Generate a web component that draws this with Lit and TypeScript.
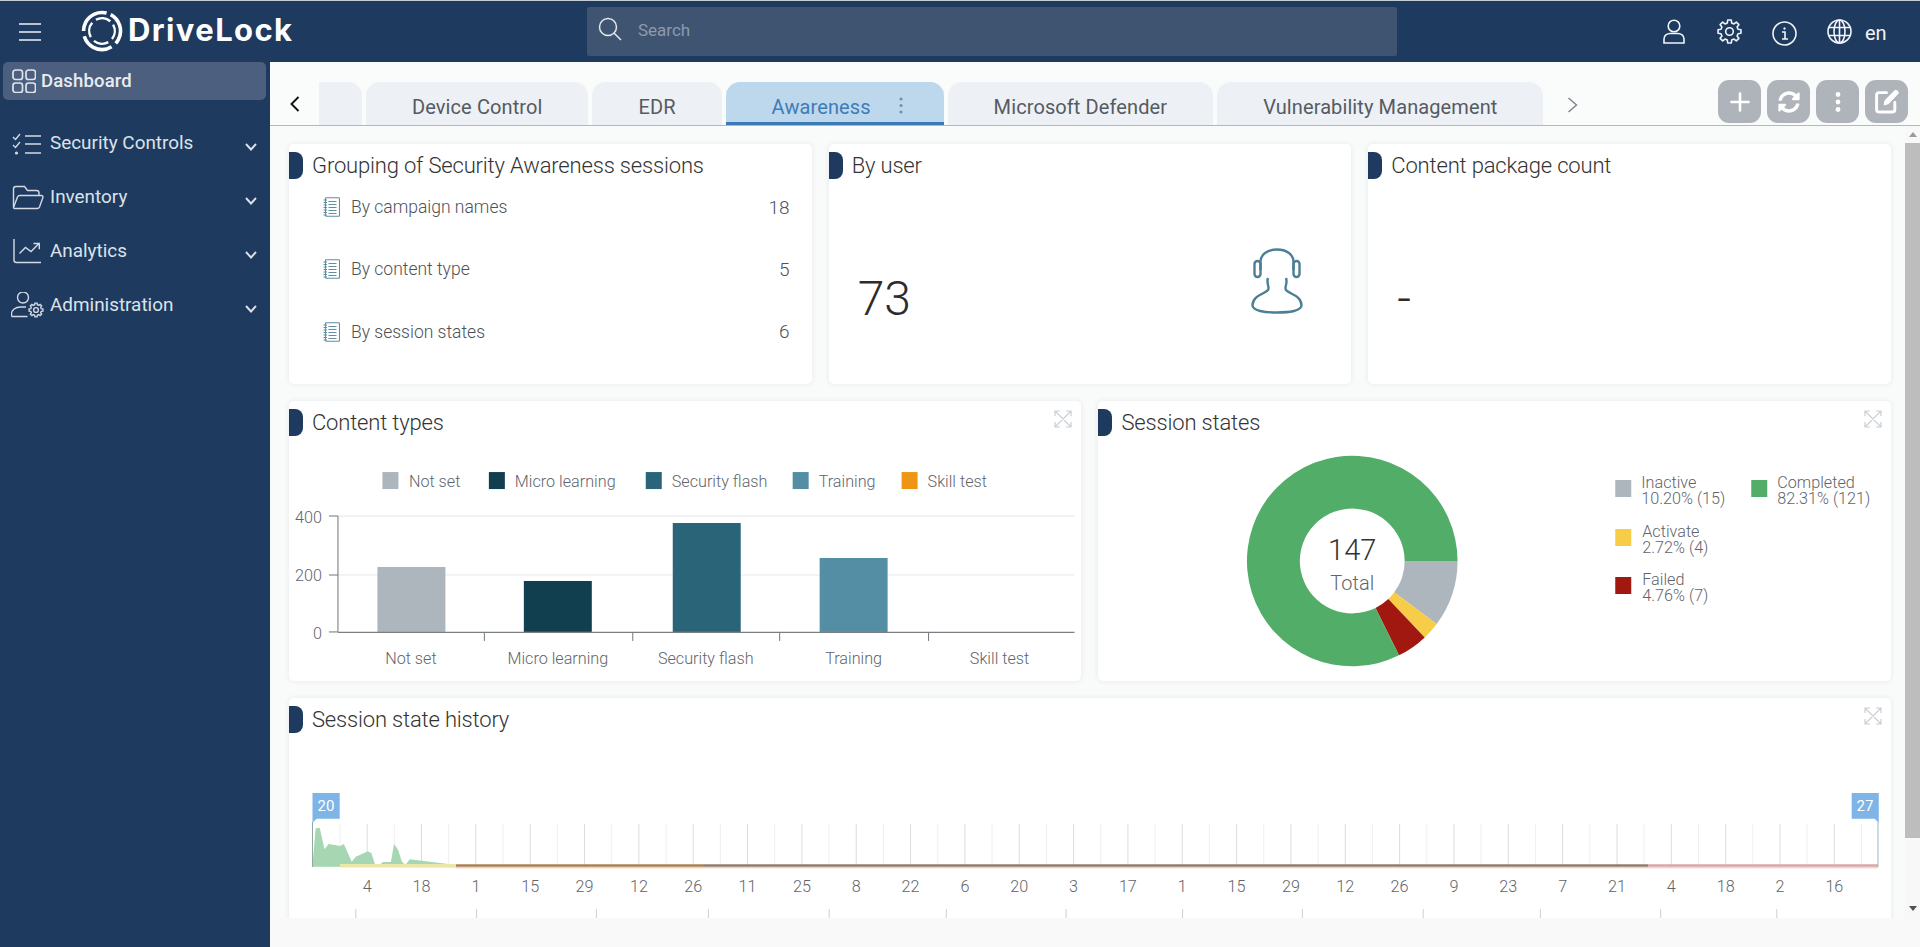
import { LitElement, html, css, svg } from "lit";
import { customElement } from "lit/decorators.js";

function gearPath(cx: number, cy: number, ro: number, ri: number, teeth: number) {
  const pts: string[] = [];
  const step = (Math.PI * 2) / teeth;
  for (let i = 0; i < teeth; i++) {
    const a = i * step - Math.PI / 2;
    const p = (r: number, t: number) =>
      `${(cx + r * Math.cos(a + t * step)).toFixed(2)} ${(cy + r * Math.sin(a + t * step)).toFixed(2)}`;
    pts.push(`${i === 0 ? "M" : "L"}${p(ro, -0.2)}`, `L${p(ro, 0.2)}`, `L${p(ri, 0.32)}`, `L${p(ri, 0.68)}`);
  }
  return pts.join(" ") + "Z";
}

function slice(cx: number, cy: number, ro: number, ri: number, a0: number, a1: number) {
  const p = (r: number, a: number) => `${(cx + r * Math.cos(a)).toFixed(2)} ${(cy + r * Math.sin(a)).toFixed(2)}`;
  const large = a1 - a0 > Math.PI ? 1 : 0;
  return `M${p(ro, a0)} A${ro} ${ro} 0 ${large} 1 ${p(ro, a1)} L${p(ri, a1)} A${ri} ${ri} 0 ${large} 0 ${p(ri, a0)}Z`;
}

const expandIcon = html`<svg class="expand" viewBox="0 0 18 18" fill="none" stroke="#c9cfd6" stroke-width="1.2">
  <path d="M1.5 1.5 16.5 16.5M16.5 1.5 1.5 16.5M1 6V1h5M12 1h5v5M1 12v5h5M17 12v5h-5" />
</svg>`;

const notebook = html`<svg class="nb" viewBox="0 0 17 20" fill="none" stroke="#5f8fa3" stroke-width="1.1">
  <rect x="2.5" y="0.8" width="14" height="18.4" rx="0.6" />
  <path d="M5.5 4.5h8M5.5 7.5h8M5.5 10.5h8M5.5 13.5h8M5.5 16.5h8" />
  <path d="M0.5 3h3.5M0.5 5.5h3.5M0.5 8h3.5M0.5 10.5h3.5M0.5 13h3.5M0.5 15.5h3.5M0.5 18h3.5" />
</svg>`;

const navItems = [
  {
    label: "Security Controls",
    icon: svg`<path d="M13 135l2.5 2.5 4.5-5.5M13 143l2.5 2.5 4.5-5.5M25 134h16M25 142h16M25 151h16" /><circle cx="16.5" cy="151" r="1.6" fill="#d3dae3" stroke="none" />`,
    box: "11 128 33 26",
  },
  {
    label: "Inventory",
    icon: svg`<path d="M13.5 206V188a2.5 2.5 0 0 1 2.5-2.5h8.5l3 4h9a2.5 2.5 0 0 1 2.5 2.5v2.5" /><path d="M13.5 206.5l4-10.500a2.500 2.500 0 0 1 2.300-1.500h21.700a1.500 1.500 0 0 1 1.400 2l-3.400 9.500a2.500 2.500 0 0 1-2.300 1.500h-22a1.500 1.500 0 0 1-1.700-1z" />`,
    box: "11 183 33 26",
  },
  {
    label: "Analytics",
    icon: svg`<path d="M14 239v21a2.500 2.500 0 0 0 2.500 2.500H41" /><path d="M19.500 253.500l6-6 5.500 4 8-8M33.500 243.500h5.800v5.800" />`,
    box: "11 238 33 26",
  },
  {
    label: "Administration",
    icon: svg`<circle cx="23" cy="297.500" r="5.500" /><path d="M11.500 316.500v-2.500c0-4 4-7 9-7h5.500M11.500 316.500h16" /><path d="${gearPath(36, 310, 7, 5.4, 8)}" /><circle cx="36" cy="310" r="2.400" />`,
    box: "11 292 33 26",
  },
];

const tabs = ["Device Control", "EDR", "Awareness", "Microsoft Defender", "Vulnerability Management"];

const rows = [
  ["By campaign names", "18"],
  ["By content type", "5"],
  ["By session states", "6"],
];

const barLegend = [
  ["Not set", 382.5, 409, "#adb5bd"],
  ["Micro learning", 489, 515, "#123f50"],
  ["Security flash", 646, 672, "#2a6478"],
  ["Training", 793, 819, "#548ea5"],
  ["Skill test", 902, 928, "#ee9516"],
] as const;

const bars = [
  [377.5, 567, "#adb5bd", "Not set", 411],
  [524, 581, "#123f50", "Micro learning", 558],
  [673, 523, "#2a6478", "Security flash", 706],
  [820, 558, "#548ea5", "Training", 854],
  [0, 632, "none", "Skill test", 1000],
] as const;

const donut = [
  [10.2, "#adb5bd"],
  [2.72, "#f7cc47"],
  [4.76, "#a0180f"],
  [82.32, "#52ad69"],
] as const;

const donutLegend = [
  [1616, 480, 1642, 482, "Inactive", "10.20% (15)", "#adb5bd"],
  [1752, 480, 1778, 482, "Completed", "82.31% (121)", "#52ad69"],
  [1616, 529, 1643, 531, "Activate", "2.72% (4)", "#f7cc47"],
  [1616, 577, 1643, 579, "Failed", "4.76% (7)", "#a0180f"],
] as const;

const historyLabels = "4 18 1 15 29 12 26 11 25 8 22 6 20 3 17 1 15 29 12 26 9 23 7 21 4 18 2 16".split(" ");
const lowerTicks = [355.8, 476.6, 596.4, 708.4, 829.2, 946.3, 1066.1, 1182.6, 1302.4, 1423.2, 1540.4, 1660.7, 1776.8];
const areaZoom = [
  [62, 530], [68, 415], [76, 413], [85, 478], [93, 462], [115, 468], [122, 462], [137, 515], [145, 500], [168, 484],
  [175, 490], [182, 525], [190, 525], [197, 516], [212, 516], [218, 462], [226, 480], [233, 515], [240, 525], [248, 508],
  [337, 525], [337, 532],
];
const areaPoints = areaZoom.map(([x, y]) => `${(280 + x / 1.912).toFixed(1)},${(690 + y / 3).toFixed(1)}`).join(" ");

@customElement("app-root")
export class AppRoot extends LitElement {
  static styles = css`
    :host {
      display: block;
      width: 1920px;
      height: 947px;
      overflow: hidden;
      font-family: Roboto, "Noto Sans", sans-serif;
      background: #f9fafa;
      color: #333;
    }
    .top {
      height: 62px;
      box-sizing: border-box;
      border-top: 1px solid #c5ccd6;
      background: #1e3a5f;
      display: flex;
      align-items: center;
      position: relative;
    }
    .burger { width: 22px; height: 18px; margin-left: 19px; flex: none; }
    .logo { width: 42px; height: 42px; margin-left: 40px; margin-top: -2px; flex: none; }
    .brand {
      margin-left: 5px;
      font: 700 31px Inter, Roboto, sans-serif;
      letter-spacing: 1.4px;
      color: #fff;
      width: 459px;
      flex: none;
      margin-top: -4px;
    }
    .search {
      width: 810px;
      height: 49px;
      margin-top: -1px;
      box-sizing: border-box;
      background: #3f5471;
      border-radius: 2px;
      display: flex;
      align-items: center;
      padding-left: 11px;
      flex: none;
    }
    .search svg { width: 24px; height: 24px; margin-top: -5px; }
    .search input {
      border: 0;
      background: none;
      outline: 0;
      margin-left: 14px;
      margin-top: -3px;
      font: 400 17px Roboto, sans-serif;
      color: #fff;
    }
    .search input::placeholder { color: #8c9aae; opacity: 1; }
    .tools { flex: 1; display: flex; align-items: center; padding-left: 266px; }
    .tools svg { flex: none; fill: none; stroke: #f1f4f7; stroke-width: 1.6; }
    .t-user { width: 22px; height: 25px; }
    .t-gear { width: 25px; height: 25px; margin-left: 32px; }
    .t-info { width: 25px; height: 25px; margin-left: 30px; margin-top: 4px; }
    .t-globe { width: 25px; height: 25px; margin-left: 30px; }
    .lang { margin-left: 13px; color: #f1f4f7; font: 400 20px Roboto, sans-serif; margin-top: 2px; }

    .body { display: flex; height: 885px; }
    .side { width: 270px; flex: none; background: #1e3a5f; }
    .dash {
      margin: 0 4px 0 3px;
      height: 38px;
      background: #4c5f7f;
      border-radius: 5px;
      display: flex;
      align-items: center;
      padding-left: 9px;
      color: #e8ecf1;
      font-weight: 500;
      font-size: 18.5px;
      letter-spacing: 0.15px;
      line-height: 40px;
    }
    .dash svg { width: 24px; height: 24px; margin-right: 5px; fill: none; stroke: #dfe5ec; stroke-width: 1.7; flex: none; }
    .nav { margin-top: 16px; }
    .nav-row {
      height: 54px;
      display: flex;
      align-items: center;
      padding: 0 13px 0 11px;
      color: #dce2e9;
      font-size: 18.9px;
    }
    .nav-row .ico { width: 33px; height: 26px; margin-right: 6px; fill: none; stroke: #d3dae3; stroke-width: 1.4; flex: none; }
    .nav-row span { flex: 1; margin-top: -1px; }
    .nav-row .chev { width: 12px; height: 8px; margin-top: 8px; fill: none; stroke: #dce2e9; stroke-width: 1.9; }

    .main { flex: 1; min-width: 0; display: flex; flex-direction: column; }
    .tabbar {
      height: 64px;
      box-sizing: border-box;
      border-bottom: 1px solid #b3b8be;
      display: flex;
      align-items: flex-end;
      padding-left: 20px;
      padding-right: 12px;
      background: #fafbfb;
    }
    .tab-chev { align-self: flex-start; width: 11px; height: 16px; fill: none; stroke-width: 1.9; flex: none; }
    .tab-back { margin-top: 34px; margin-right: 19px; stroke: #111; width: 10px; }
    .tab-next { margin-top: 35px; margin-left: 24px; stroke: #80868c; stroke-width: 1.5; }
    .tab {
      height: 43px;
      box-sizing: border-box;
      padding: 7px 46px 0;
      margin-right: 4px;
      background: #edf0f5;
      border-radius: 14px 14px 0 0;
      display: flex;
      align-items: center;
      font-size: 20px;
      letter-spacing: 0.1px;
      color: #555b62;
      white-space: nowrap;
    }
    .tab.stub { width: 43px; padding: 0; border-top-left-radius: 0; }
    .tab.on {
      background: #bdd7ed;
      color: #3f7cb7;
      box-shadow: inset 0 -3px 0 #3c7ab6;
      padding-right: 41px;
    }
    .tab.on svg { width: 4px; height: 17px; margin-left: 28px; margin-top: -4px; fill: #6d8fae; }
    .tab.last { margin-right: 0; }
    .actions {
      margin-left: auto;
      align-self: flex-start;
      margin-top: 18px;
      display: flex;
      gap: 6px;
    }
    .act {
      width: 43px;
      height: 43px;
      border-radius: 11px;
      background: #aeb4ba;
      display: flex;
      align-items: center;
      justify-content: center;
    }
    .act svg { width: 22px; height: 22px; }
    .act svg.edit { width: 25px; height: 25px; }

    .middle { height: 792px; display: flex; }
    .pane {
      flex: 1;
      min-width: 0;
      overflow: hidden;
      box-sizing: border-box;
      padding: 18px 14px 0 19px;
      display: grid;
      grid-template-columns: repeat(6, 1fr);
      grid-template-rows: 240px 280px 300px;
      gap: 17px;
    }
    .card {
      background: #fff;
      border-radius: 5px;
      box-shadow: 0 0 5px rgba(60, 80, 110, 0.1);
      position: relative;
      display: flex;
      flex-direction: column;
      min-width: 0;
    }
    .c2 { grid-column: span 2; }
    .c3 { grid-column: span 3; }
    .c6 { grid-column: span 6; }
    .head { display: flex; padding-top: 8px; flex: none; }
    .accent { width: 14px; height: 27px; background: #1e3a5f; border-radius: 0 8px 8px 0; flex: none; }
    .title { margin-left: 9px; font-size: 22px; line-height: 27px; font-weight: 300; color: #333; letter-spacing: -0.17px; }
    .expand { position: absolute; top: 9px; right: 9px; width: 18px; height: 18px; }
    .list { padding: 18px 22px 0 34px; display: flex; flex-direction: column; gap: 42.4px; }
    .row { height: 20px; display: flex; align-items: center; font-size: 17.5px; font-weight: 300; color: #4c5259; }
    .row b { font-weight: 300; margin-left: auto; font-size: 19px; }
    .nb { width: 17px; height: 20px; margin-right: 11px; }
    .metric { display: flex; justify-content: space-between; align-items: flex-start; padding: 69px 48px 0 29px; }
    .num { font-size: 48px; font-weight: 300; line-height: 50px; margin-top: 26px; color: #2c2c2c; }
    .person { width: 52px; height: 66px; fill: none; stroke: #4a7f95; stroke-width: 2.4; }
    svg.plot { display: block; }
    .plot text { font-family: Roboto, sans-serif; font-weight: 300; font-size: 16.2px; fill: #5f656b; dominant-baseline: central; }
    .plot text.mid { text-anchor: middle; }
    .plot text.end { text-anchor: end; }
    .plot text.big { font-size: 29px; font-weight: 300; fill: #333; }
    .plot text.tot { font-size: 20px; fill: #5f656b; }
    .plot text.flag { font-size: 15px; font-weight: 400; fill: #fff; }

    .bar { width: 15px; flex: none; background: #f8f8f8; display: flex; flex-direction: column; align-items: center; }
    .bar-top { height: 17px; flex: none; display: flex; align-items: center; justify-content: center; }
    .bar-thumb { height: 695px; width: 100%; background: #bdbdbd; flex: none; }
    .bar-bot { flex: 1; display: flex; align-items: flex-end; justify-content: center; padding-bottom: 7px; box-sizing: border-box; width: 100%; }
    .tri-up { border: 4px solid transparent; border-top: 0; border-bottom: 5px solid #9a9a9a; }
    .tri-down { border: 4px solid transparent; border-bottom: 0; border-top: 5px solid #505050; }
    .foot { height: 29px; background: #f9f9f9; }
  `;

  render() {
    const step = 27.17;
    const ticks = Array.from({ length: 57 }, (_, i) => 340 + step * i);
    let acc = 0;
    const arcs = donut.map(([p, col]) => {
      const a0 = (acc / 100) * Math.PI * 2;
      acc += p;
      const a1 = (acc / 100) * Math.PI * 2;
      return svg`<path d="${slice(1353, 561, 105.3, 52.4, a0, a1)}" fill="${col}" />`;
    });
    return html`
      <div class="top">
        <svg class="burger" viewBox="0 0 22 18" stroke="#eef1f5" stroke-width="1.6"><path d="M0 1h22M0 9h22M0 17h22" /></svg>
        <svg class="logo" viewBox="0 0 42 42" fill="none" stroke="#fff">
          <circle cx="21" cy="21" r="18.500" stroke-width="3.600" stroke-dasharray="33.500 5.250" transform="rotate(-62 21 21)" />
          <circle cx="21" cy="21" r="12.800" stroke-width="2.400" stroke-dasharray="15.200 4.900" transform="rotate(-30 21 21)" />
        </svg>
        <div class="brand">DriveLock</div>
        <div class="search">
          <svg viewBox="0 0 24 24" fill="none" stroke="#e4e8ee" stroke-width="1.500"><circle cx="10" cy="10" r="8.500" /><path d="M16.200 16.200 23 23" /></svg>
          <input placeholder="Search" />
        </div>
        <div class="tools">
          <svg class="t-user" viewBox="0 0 22 25"><circle cx="11" cy="7" r="5.800" /><path d="M1 24v-4c0-3.500 3-5.500 6-5.500h8c3 0 6 2 6 5.500v4z" /></svg>
          <svg class="t-gear" viewBox="0 0 25 25"><path d="${gearPath(12.5, 12.5, 11.6, 8.800, 8)}" stroke-linejoin="round" /><circle cx="12.500" cy="12.500" r="3.800" /></svg>
          <svg class="t-info" viewBox="0 0 25 25"><circle cx="12.500" cy="12.500" r="11.500" /><path d="M10 11h3v7M10 18h6" /><circle cx="12.500" cy="7.500" r="0.900" fill="#f1f4f7" stroke-width="0.500" /></svg>
          <svg class="t-globe" viewBox="0 0 25 25"><circle cx="12.500" cy="12.500" r="11.500" /><ellipse cx="12.500" cy="12.500" rx="5.500" ry="11.500" /><path d="M12.500 1v23M1.500 8.500h22M1.500 16.500h22" /></svg>
          <div class="lang">en</div>
        </div>
      </div>
      <div class="body">
        <aside class="side">
          <div class="dash">
            <svg viewBox="0 0 24 24"><rect x="1" y="1" width="9.500" height="9.500" rx="2.500" /><rect x="14" y="1" width="9.500" height="9.500" rx="2.500" /><rect x="1" y="14" width="9.500" height="9.500" rx="2.500" /><rect x="14" y="14" width="9.500" height="9.500" rx="2.500" /></svg>
            Dashboard
          </div>
          <div class="nav">
            ${navItems.map(
              (n) => html`<div class="nav-row">
                <svg class="ico" viewBox="${n.box}">${n.icon}</svg>
                <span>${n.label}</span>
                <svg class="chev" viewBox="0 0 12 8"><path d="M1 1l5 5.500 5-5.500" /></svg>
              </div>`
            )}
          </div>
        </aside>
        <main class="main">
          <div class="tabbar">
            <svg class="tab-chev tab-back" viewBox="0 0 10 16"><path d="M8.500 1 1.500 8l7 7" /></svg>
            <div class="tab stub"></div>
            ${tabs.map(
              (t, i) => html`<div class="tab ${t === "Awareness" ? "on" : ""} ${i === tabs.length - 1 ? "last" : ""}">
                ${t}${t === "Awareness"
                  ? html`<svg viewBox="0 0 4 17"><circle cx="2" cy="2" r="1.500" /><circle cx="2" cy="8.500" r="1.500" /><circle cx="2" cy="15" r="1.500" /></svg>`
                  : ""}
              </div>`
            )}
            <svg class="tab-chev tab-next" viewBox="0 0 11 16"><path d="M1.500 1l8 7-8 7" /></svg>
            <div class="actions">
              <div class="act"><svg viewBox="0 0 22 22" stroke="#fff" stroke-width="2.600" stroke-linecap="round"><path d="M11 2.500v17M2.500 11h17" /></svg></div>
              <div class="act"><svg viewBox="0 0 512 512" fill="#fff"><path d="M370.72 133.28C339.458 104.008 298.888 87.962 255.848 88c-77.458.068-144.328 53.178-162.791 126.85-1.344 5.363-6.122 9.15-11.651 9.15H24.103c-7.498 0-13.194-6.807-11.807-14.176C33.933 94.924 134.813 8 256 8c66.448 0 126.791 26.136 171.315 68.685L463.03 40.97C478.149 25.851 504 36.559 504 57.941V192c0 13.255-10.745 24-24 24H345.941c-21.382 0-32.09-25.851-16.971-40.971l41.75-41.749zM32 296h134.059c21.382 0 32.09 25.851 16.971 40.971l-41.75 41.75c31.262 29.273 71.835 45.319 114.876 45.28 77.418-.07 144.315-53.144 162.787-126.849 1.344-5.363 6.122-9.15 11.651-9.15h57.304c7.498 0 13.194 6.807 11.807 14.176C478.067 417.076 377.187 504 256 504c-66.448 0-126.791-26.136-171.315-68.685L48.97 471.03C33.851 486.149 8 475.441 8 454.059V320c0-13.255 10.745-24 24-24z" /></svg></div>
              <div class="act"><svg viewBox="0 0 22 22" fill="#fff"><circle cx="11" cy="3.500" r="2.400" /><circle cx="11" cy="11" r="2.400" /><circle cx="11" cy="18.500" r="2.400" /></svg></div>
              <div class="act"><svg class="edit" viewBox="0 0 24 24" fill="none" stroke="#fff" stroke-width="2.800" stroke-linecap="round" stroke-linejoin="round"><path d="M12 3.500H4.500a2 2 0 0 0-2 2V20a2 2 0 0 0 2 2H18a2 2 0 0 0 2-2v-7" /><path d="M10 15l.800-3.800L20.300 1.800a1 1 0 0 1 1.400 0l1 1a1 1 0 0 1 0 1.400L13.500 14z" fill="#fff" stroke-width="1.400" /></svg></div>
            </div>
          </div>
          <div class="middle">
            <div class="pane">
              <section class="card c2">
                <div class="head"><div class="accent"></div><div class="title">Grouping of Security Awareness sessions</div></div>
                <div class="list">
                  ${rows.map((r) => html`<div class="row">${notebook}<span>${r[0]}</span><b>${r[1]}</b></div>`)}
                </div>
              </section>
              <section class="card c2">
                <div class="head"><div class="accent"></div><div class="title">By user</div></div>
                <div class="metric">
                  <div class="num">73</div>
                  <svg class="person" viewBox="0 0 52 66">
                    <path d="M9.500 22V14C9.500 6 17 1.500 26 1.500S42.500 6 42.500 14V22" />
                    <rect x="3.500" y="13" width="6" height="16" rx="3" /><rect x="42.500" y="13" width="6" height="16" rx="3" />
                    <path d="M17 30C15 36 19 39 17 42C14 46 2 47 1.500 57C1 63 14 64.500 26 64.500S51 63 50.500 57C50 47 38 46 35 42C33 39 37 36 35 30" />
                  </svg>
                </div>
              </section>
              <section class="card c2">
                <div class="head"><div class="accent"></div><div class="title">Content package count</div></div>
                <div class="metric"><div class="num">-</div></div>
              </section>

              <section class="card c3">
                <div class="head"><div class="accent"></div><div class="title">Content types</div></div>
                ${expandIcon}
                <svg class="plot" width="100%" height="245" viewBox="289 436 793 245">
                  ${barLegend.map(
                    ([t, sx, tx, col]) => svg`<rect x="${sx}" y="472" width="16" height="17" fill="${col}" /><text x="${tx}" y="481">${t}</text>`
                  )}
                  <path d="M338 516H1075M338 575H1075" stroke="#e8eaec" stroke-width="1.200" fill="none" />
                  ${bars.map(
                    ([x, top, col]) => (col === "none" ? "" : svg`<rect x="${x}" y="${top}" width="68" height="${632 - top}" fill="${col}" />`)
                  )}
                  <path d="M329 516h9M329 575h9M329 632h9M338 516V632M484.500 632v9M633 632v9M780 632v9M929 632v9" stroke="#6f7478" stroke-width="1" fill="none" />
                  <path d="M338 632.500H1075" stroke="#7a7f84" stroke-width="1.300" />
                  <text class="end" x="322" y="517">400</text>
                  <text class="end" x="322" y="576">200</text>
                  <text class="end" x="322" y="634">0</text>
                  ${bars.map(([, , , t, cx]) => svg`<text class="mid" x="${cx}" y="659">${t}</text>`)}
                </svg>
              </section>
              <section class="card c3">
                <div class="head"><div class="accent"></div><div class="title">Session states</div></div>
                ${expandIcon}
                <svg class="plot" width="100%" height="245" viewBox="1099 436 792 245">
                  ${arcs}
                  <text class="mid big" x="1353" y="550">147</text>
                  <text class="mid tot" x="1353" y="583">Total</text>
                  ${donutLegend.map(
                    ([sx, sy, tx, ty, a, b, col]) =>
                      svg`<rect x="${sx}" y="${sy}" width="16" height="17" fill="${col}" /><text x="${tx}" y="${ty}">${a}</text><text x="${tx}" y="${ty + 16}">${b}</text>`
                  )}
                </svg>
              </section>

              <section class="card c6">
                <div class="head"><div class="accent"></div><div class="title">Session state history</div></div>
                ${expandIcon}
                <svg class="plot" width="100%" height="200" viewBox="289 733 1602 200">
                  ${ticks.map(
                    (x, i) => svg`<line x1="${x}" x2="${x}" y1="824" y2="867" stroke="${i % 2 ? "#dcdcdc" : "#efefef"}" stroke-width="1" />`
                  )}
                  <polygon points="${areaPoints}" fill="#a6d7b2" />
                  <rect x="340" y="864" width="116" height="3.500" fill="#e9e8a8" />
                  <rect x="456" y="864.300" width="248" height="2.500" fill="#a77c52" />
                  <rect x="456" y="866.800" width="248" height="1.500" fill="#f5cfa6" />
                  <rect x="704" y="864.300" width="944" height="2.500" fill="#8f7769" />
                  <rect x="704" y="866.800" width="944" height="1.500" fill="#eed0c2" />
                  <rect x="1648" y="864.300" width="230" height="2.500" fill="#d9a3a3" />
                  <rect x="1648" y="866.800" width="230" height="1.500" fill="#f2d1d1" />
                  <line x1="312.500" x2="312.500" y1="822" y2="867" stroke="#8fa8a0" />
                  <line x1="1878" x2="1878" y1="822" y2="867" stroke="#9fb5c6" />
                  <path d="M312.500 793h27.200v25.700h-23l-4.200 4z" fill="#7fb4e6" />
                  <text class="mid flag" x="326" y="806">20</text>
                  <path d="M1851.700 793h27.100v29.700l-4.200-4h-22.900z" fill="#7fb4e6" />
                  <text class="mid flag" x="1865" y="806">27</text>
                  ${historyLabels.map(
                    (t, i) => svg`<text class="mid" x="${(367.170 + step * 2 * i).toFixed(1)}" y="887">${t}</text>`
                  )}
                  ${lowerTicks.map((x) => svg`<line x1="${x}" x2="${x}" y1="909" y2="930" stroke="#cfcfcf" />`)}
                </svg>
              </section>
            </div>
            <div class="bar">
              <div class="bar-top"><div class="tri-up"></div></div>
              <div class="bar-thumb"></div>
              <div class="bar-bot"><div class="tri-down"></div></div>
            </div>
          </div>
          <div class="foot"></div>
        </main>
      </div>
    `;
  }
}
